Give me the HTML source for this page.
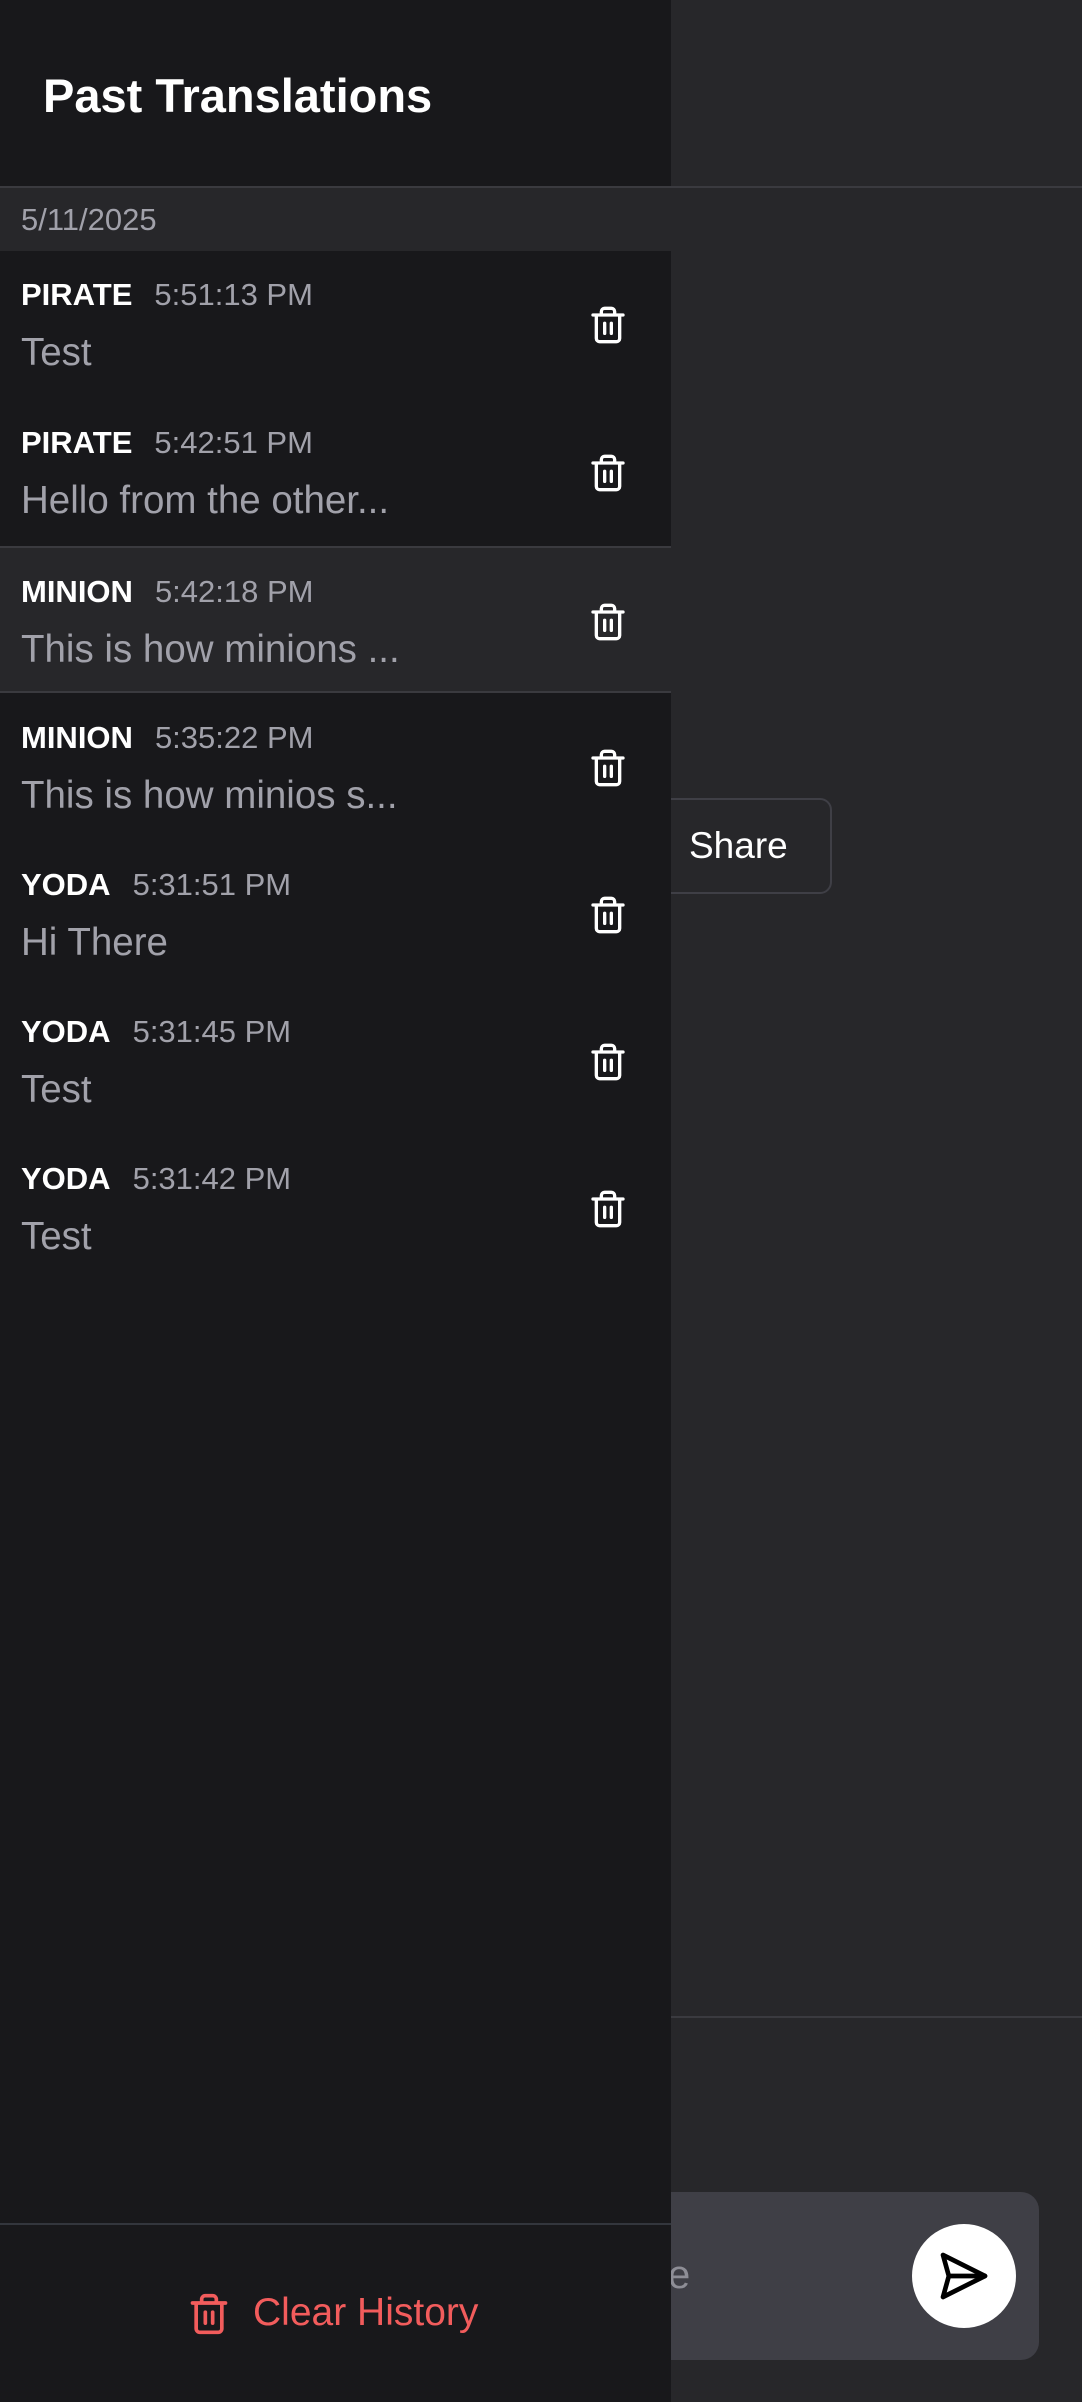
<!DOCTYPE html>
<html><head><meta charset="utf-8"><style>
*{box-sizing:border-box;margin:0;padding:0}
body{width:1082px;height:2402px;background:#27272a;font-family:"Liberation Sans",sans-serif;position:relative;overflow:hidden}
.abs{position:absolute}
.drawer{left:0;top:0;width:671px;height:2402px;background:#18181b}
.title{left:43px;top:68px;font-size:47px;font-weight:bold;color:#fff}
.item{position:absolute;left:0;width:671px;height:147px}
.lab{position:absolute;left:21px;top:26px;font-size:31px;font-weight:bold;color:#fff}
.lab span{font-weight:normal;color:#a1a1aa;margin-left:22px}
.msg{position:absolute;left:21px;top:80px;font-size:38.5px;color:#a1a1aa}
.tr{position:absolute;left:588px;top:54px}
</style></head><body>
<div class="abs" style="left:0;top:186px;width:1082px;height:2px;background:#3a3a3f"></div>
<div class="abs" style="left:644px;top:798px;width:188px;height:96px;border:2px solid #3f3f46;border-radius:12px"></div>
<div class="abs" style="left:689px;top:825px;font-size:37px;color:#fff">Share</div>
<div class="abs" style="left:671px;top:2016px;width:411px;height:2px;background:#3a3a3f"></div>
<div class="abs" style="left:600px;top:2192px;width:439px;height:168px;background:#3f3f46;border-radius:18px"></div>
<div class="abs" style="left:668px;top:2253px;font-size:40px;color:#8e8e96">e</div>
<div class="abs" style="left:912px;top:2224px;width:104px;height:104px;border-radius:50%;background:#fff"></div>
<svg class="abs" style="left:936px;top:2248px" width="56" height="56" viewBox="0 0 24 24" fill="none" stroke="#000" stroke-width="2" stroke-linejoin="round" stroke-linecap="round"><path d="M3 3l18 9-18 9 2.5-9z"/><path d="M5.5 12H21"/></svg>

<div class="abs drawer">
<div class="abs title">Past Translations</div>
<div class="abs" style="left:0;top:186px;width:671px;height:2px;background:#3a3a3f"></div>
<div class="abs" style="left:0;top:188px;width:671px;height:63px;background:#27272a"></div>
<div class="abs" style="left:21px;top:202px;font-size:31px;color:#a1a1aa">5/11/2025</div>

<div class="item" style="top:251px"><div class="lab">PIRATE<span>5:51:13 PM</span></div><div class="msg">Test</div><svg class="tr" width="40" height="40" viewBox="0 0 24 24" fill="none" stroke="#fff" stroke-width="2" stroke-linecap="round" stroke-linejoin="round"><path d="M3 6h18M19 6v14a2 2 0 0 1-2 2H7a2 2 0 0 1-2-2V6M8 6V4a2 2 0 0 1 2-2h4a2 2 0 0 1 2 2v2M10 11v6M14 11v6"/></svg></div>
<div class="item" style="top:399px"><div class="lab">PIRATE<span>5:42:51 PM</span></div><div class="msg">Hello from the other...</div><svg class="tr" width="40" height="40" viewBox="0 0 24 24" fill="none" stroke="#fff" stroke-width="2" stroke-linecap="round" stroke-linejoin="round"><path d="M3 6h18M19 6v14a2 2 0 0 1-2 2H7a2 2 0 0 1-2-2V6M8 6V4a2 2 0 0 1 2-2h4a2 2 0 0 1 2 2v2M10 11v6M14 11v6"/></svg></div>
<div class="item" style="top:546px;background:#27272a;border-top:2px solid #3a3a3f;border-bottom:2px solid #3a3a3f"><div class="lab">MINION<span>5:42:18 PM</span></div><div class="msg">This is how minions ...</div><svg class="tr" width="40" height="40" viewBox="0 0 24 24" fill="none" stroke="#fff" stroke-width="2" stroke-linecap="round" stroke-linejoin="round"><path d="M3 6h18M19 6v14a2 2 0 0 1-2 2H7a2 2 0 0 1-2-2V6M8 6V4a2 2 0 0 1 2-2h4a2 2 0 0 1 2 2v2M10 11v6M14 11v6"/></svg></div>
<div class="item" style="top:694px"><div class="lab">MINION<span>5:35:22 PM</span></div><div class="msg">This is how minios s...</div><svg class="tr" width="40" height="40" viewBox="0 0 24 24" fill="none" stroke="#fff" stroke-width="2" stroke-linecap="round" stroke-linejoin="round"><path d="M3 6h18M19 6v14a2 2 0 0 1-2 2H7a2 2 0 0 1-2-2V6M8 6V4a2 2 0 0 1 2-2h4a2 2 0 0 1 2 2v2M10 11v6M14 11v6"/></svg></div>
<div class="item" style="top:841px"><div class="lab">YODA<span>5:31:51 PM</span></div><div class="msg">Hi There</div><svg class="tr" width="40" height="40" viewBox="0 0 24 24" fill="none" stroke="#fff" stroke-width="2" stroke-linecap="round" stroke-linejoin="round"><path d="M3 6h18M19 6v14a2 2 0 0 1-2 2H7a2 2 0 0 1-2-2V6M8 6V4a2 2 0 0 1 2-2h4a2 2 0 0 1 2 2v2M10 11v6M14 11v6"/></svg></div>
<div class="item" style="top:988px"><div class="lab">YODA<span>5:31:45 PM</span></div><div class="msg">Test</div><svg class="tr" width="40" height="40" viewBox="0 0 24 24" fill="none" stroke="#fff" stroke-width="2" stroke-linecap="round" stroke-linejoin="round"><path d="M3 6h18M19 6v14a2 2 0 0 1-2 2H7a2 2 0 0 1-2-2V6M8 6V4a2 2 0 0 1 2-2h4a2 2 0 0 1 2 2v2M10 11v6M14 11v6"/></svg></div>
<div class="item" style="top:1135px"><div class="lab">YODA<span>5:31:42 PM</span></div><div class="msg">Test</div><svg class="tr" width="40" height="40" viewBox="0 0 24 24" fill="none" stroke="#fff" stroke-width="2" stroke-linecap="round" stroke-linejoin="round"><path d="M3 6h18M19 6v14a2 2 0 0 1-2 2H7a2 2 0 0 1-2-2V6M8 6V4a2 2 0 0 1 2-2h4a2 2 0 0 1 2 2v2M10 11v6M14 11v6"/></svg></div>

<div class="abs" style="left:0;top:2223px;width:671px;height:2px;background:#33363d"></div>
<svg class="abs" style="left:187px;top:2292px" width="44" height="44" viewBox="0 0 24 24" fill="none" stroke="#f25c5c" stroke-width="2" stroke-linecap="round" stroke-linejoin="round"><path d="M3 6h18M19 6v14a2 2 0 0 1-2 2H7a2 2 0 0 1-2-2V6M8 6V4a2 2 0 0 1 2-2h4a2 2 0 0 1 2 2v2M10 11v6M14 11v6"/></svg>
<div class="abs" style="left:253px;top:2291px;font-size:39px;color:#f25c5c">Clear History</div>
</div>
</body></html>
